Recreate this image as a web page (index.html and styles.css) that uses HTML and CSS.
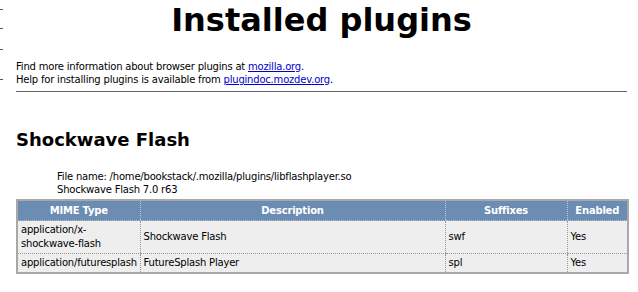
FILE: index.html
```html
<!DOCTYPE html>
<html lang="en-US">
<head>
	<title>Installed plugins</title>
	<link rel="stylesheet" href="styles.css">
</head>
<body>
	<div class="ticks"><span></span><span></span><span></span><span></span></div>
	<h1>Installed plugins</h1>
	<p class="intro">
		Find more information about browser plugins at <a href="#">mozilla.org</a>.<br>
		Help for installing plugins is available from <a href="#">plugindoc.mozdev.org</a>.
	</p>
	<hr>
	<h2>Shockwave Flash</h2>
	<dl class="pluginInfo">
		<dd>File name: /home/bookstack/.mozilla/plugins/libflashplayer.so</dd>
		<dd>Shockwave Flash 7.0 r63</dd>
	</dl>
	<table class="mimeTable">
		<colgroup>
			<col class="colMime">
			<col class="colDesc">
			<col class="colSuffix">
			<col class="colEnabled">
		</colgroup>
		<thead>
			<tr>
				<th>MIME Type</th>
				<th>Description</th>
				<th>Suffixes</th>
				<th>Enabled</th>
			</tr>
		</thead>
		<tbody>
			<tr class="tallRow">
				<td>application/x-<br>shockwave-flash</td>
				<td>Shockwave Flash</td>
				<td>swf</td>
				<td>Yes</td>
			</tr>
			<tr>
				<td>application/futuresplash</td>
				<td>FutureSplash Player</td>
				<td>spl</td>
				<td>Yes</td>
			</tr>
		</tbody>
	</table>
</body>
</html>
```

FILE: styles.css
```css
body {
	margin: 0;
	padding: 0 11px 0 16px;
	font-family: "DejaVu Sans", Verdana, sans-serif;
	font-size: 10px;
	letter-spacing: -0.2px;
	color: #000;
	background: #fff;
	position: relative;
}

div.ticks {
	position: absolute;
	left: 0;
	top: 0;
}

div.ticks span {
	position: absolute;
	left: 0;
	width: 3px;
	height: 1px;
	background: #555;
}

div.ticks span:nth-child(1) { top: 9px; }
div.ticks span:nth-child(2) { top: 28px; }
div.ticks span:nth-child(3) { top: 49px; }
div.ticks span:nth-child(4) { top: 79px; }

h1 {
	margin: 0;
	padding-top: 1px;
	text-align: center;
	font-size: 32px;
	line-height: 38px;
	letter-spacing: 0;
}

p.intro {
	margin: 21px 0 0;
	line-height: 13px;
}

a {
	color: #00c;
}

hr {
	margin: 5px 0 0;
	border: none;
	border-top: 1px solid #666;
	height: 0;
}

h2 {
	margin: 37px 0 0;
	font-size: 18px;
	line-height: 22px;
	letter-spacing: 0;
}

dl.pluginInfo {
	margin: 19px 0 0;
	line-height: 13px;
}

dl.pluginInfo dd {
	margin-left: 41px;
}

table.mimeTable {
	margin-top: 3px;
	width: 611px;
	table-layout: fixed;
	border-collapse: collapse;
	border: 2px solid #a8a8a8;
}

col.colMime { width: 123px; }
col.colDesc { width: 305px; }
col.colSuffix { width: 122px; }
col.colEnabled { width: 61px; }

table.mimeTable th {
	background: #6b8cb3;
	color: #fff;
	font-weight: bold;
	height: 19px;
	padding: 0 3px;
	border-left: 1px dotted #c0c8d0;
	border-bottom: 1px dotted #bbb;
}

table.mimeTable td {
	background: #eee;
	padding: 2px 3px;
	line-height: 14px;
	white-space: nowrap;
	border-left: 1px dotted #999;
	border-bottom: 1px dotted #999;
}

tr.tallRow td {
	height: 28px;
}
```
